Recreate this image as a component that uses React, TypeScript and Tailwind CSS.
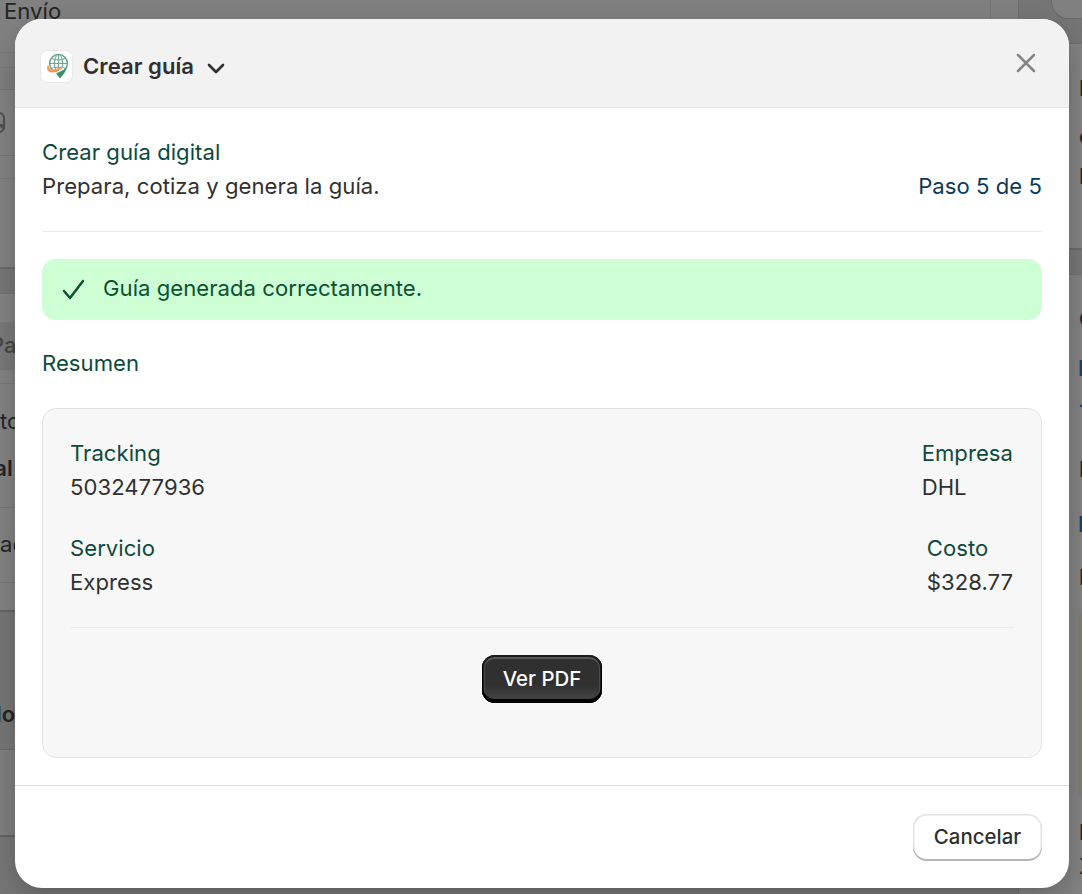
import type { ReactNode } from "react";

function Pair({ label, value }: { label: string; value: string }) {
  return (
    <div>
      <div className="text-[#0c4a3e]">{label}</div>
      <div>{value}</div>
    </div>
  );
}

function Row({ className, children }: { className: string; children?: ReactNode }) {
  return (
    <div className={`flex shrink-0 items-center whitespace-nowrap ${className}`}>{children}</div>
  );
}

function Backdrop() {
  return (
    <div className="flex h-[894px] overflow-hidden bg-[#757575] text-[#242424]">
      <div className="flex w-[1019px] shrink-0 flex-col border-r border-[#6c6c6c]">
        <Row className="h-[53px] border-b border-[#777777] bg-[#808080] pl-[4px]">
          <span className="-mt-[30px] flex-1">Envío</span>
          <span className="h-full w-[28px] border-l border-[#747474]" />
        </Row>
        <Row className="h-[15px] border-b border-[#777777] bg-[#808080]" />
        <Row className="h-[22px] border-b border-[#727272] bg-[#7d7d7d]" />
        <Row className="h-[66px] border-b border-[#727272] bg-[#808080]">
          <svg className="-ml-[14px]" width="20" height="24" viewBox="0 0 20 24" fill="none" stroke="#505050" strokeWidth="2.2">
            <rect x="2" y="2" width="16" height="19" rx="5" />
            <path d="M11 19l3-5h4M14 14l4 4" />
          </svg>
        </Row>
        <Row className="h-[23px] border-b border-[#777777] bg-[#808080]" />
        <Row className="h-[90px] border-b-2 border-[#6a6a6a] bg-[#808080]" />
        <Row className="h-[25px] border-b border-[#707070]" />
        <Row className="h-[28px] bg-[#808080]" />
        <Row className="h-[48px] bg-[#777777] pb-[2px] font-medium text-[#454545]">
          <span className="-ml-[10px]">Pago</span>
        </Row>
        <Row className="h-[14px] border-b border-[#747474] bg-[#808080]" />
        <Row className="h-[76px] bg-[#808080] pb-[2px]"><span>total</span></Row>
        <Row className="h-[48px] border-b border-[#747474] bg-[#808080] pb-[32px] font-semibold">
          <span className="-ml-[40px]">Total</span>
        </Row>
        <Row className="h-[75px] border-b border-[#747474] bg-[#808080] pb-[2px]"><span>ado</span></Row>
        <Row className="h-[29px] border-b-2 border-[#636363] bg-[#808080]" />
        <Row className="h-[138px] border-b border-[#6b6b6b] bg-[#747474] pt-[66px] font-semibold">
          <span className="-ml-[4px]">lo</span>
        </Row>
        <Row className="h-[87px] border-b-2 border-[#626262] bg-[#7d7d7d]" />
      </div>
      <div className="flex w-[63px] shrink-0 flex-col font-semibold">
        <div className="flex h-[44px] shrink-0 justify-end border-b border-[#6c6c6c]">
          <div className="h-[19px] w-[31px] rounded-bl-[17px] border-b border-l border-[#696969] bg-[#808080]" />
        </div>
        <div className="flex h-[206px] shrink-0 flex-col items-end border-b-2 border-[#6a6a6a] bg-[#808080] pt-[27px]">
          <span className="flex h-[48px] w-[3px]">N</span>
          <span className="flex h-[40px] w-[3px]">o</span>
          <span className="flex h-[40px] w-[3px]">N</span>
        </div>
        <div className="h-[25px] shrink-0 border-b border-[#707070]" />
        <div className="flex h-[640px] shrink-0 flex-col items-end bg-[#808080] pt-[27px]">
          <span className="flex h-[49px] w-[3px]">C</span>
          <span className="flex h-[36px] w-[4px] text-[#1d3d70]">E</span>
          <span className="flex h-[65px] w-[4px] text-[#1d3d70]">+</span>
          <span className="flex h-[55px] w-[3px]">D</span>
          <span className="flex h-[53px] w-[4px] text-[#1d3d70]">E</span>
          <span className="flex h-[54px] w-[3px]">D</span>
          <div className="mb-[17px] h-[184px] w-[4px] shrink-0 rounded-l-[4px] bg-[#807a74]" />
          <span className="flex h-[34px] w-[3px]">L</span>
          <span className="flex w-[3px] font-normal">X</span>
        </div>
      </div>
    </div>
  );
}

function AppLogo() {
  return (
    <div className="mt-[6px] flex size-[31px] items-center justify-center rounded-[6px] bg-white shadow-[0_0_0_1px_#e8e8e8]">
      <svg width="24" height="26" viewBox="0 0 24 26" fill="none">
        <circle cx="13.5" cy="10.5" r="9" stroke="#5c9f86" strokeWidth="1.4" />
        <path d="M13.5 2v16M4.5 10.5h18M6.5 5.5q7 2.5 14 0M6 15.5q7.500-3 15 0M11.500 2.500Q7 10 11.500 18M15.500 2.500Q20 10 15.500 18" stroke="#6ba991" strokeWidth="1.1" />
        <path d="M22 12.500Q20 18 11 20.500L15 25.500Q21.500 19 22 12.500Z" fill="#3d9168" />
        <path d="M3 12.500Q.8 17.500 5.500 19Q11 20 17 14.500L12 14.300L13 15.800L8.500 17Q4 17 3 12.500Z" fill="#f09a55" stroke="#f09a55" strokeWidth=".6" />
        <path d="M5.500 20.300Q12 21.500 18 15" stroke="#fff" strokeWidth="1" />
      </svg>
    </div>
  );
}

export default function App() {
  return (
    <main className="relative h-[894px] w-[1082px] overflow-hidden font-['Inter',sans-serif] text-[22.1px] leading-[34px] tracking-[0.04px] text-[#303030]">
      <Backdrop />
      <section
        role="dialog"
        className="absolute top-[19px] left-[15px] flex h-[869px] w-[1054px] flex-col overflow-hidden rounded-[27px] bg-white shadow-[0_8px_24px_-4px_rgba(0,0,0,0.28)]"
      >
        <header className="flex h-[89px] shrink-0 items-center border-b border-[#e1e1e1] bg-[#f2f2f2] pr-[33px] pl-[26px]">
          <AppLogo />
          <h1 className="mt-[6px] ml-[11px] font-[580]">Crear guía</h1>
          <svg className="mt-[11px] ml-[13px]" width="18" height="12" viewBox="0 0 18 12" fill="none" stroke="#303030" strokeWidth="2.7" strokeLinecap="round" strokeLinejoin="round">
            <path d="M2 2l7 7 7-7" />
          </svg>
          <button aria-label="Cerrar" className="ml-auto">
            <svg width="20" height="20" viewBox="0 0 20 20" fill="none" stroke="#858585" strokeWidth="2.500" strokeLinecap="round">
              <path d="M2 2l16 16M18 2L2 18" />
            </svg>
          </button>
        </header>

        <div className="flex-1 px-[27px] pt-[27px]">
          <div className="text-[#0c4a3e]">Crear guía digital</div>
          <div className="flex justify-between">
            <span>Prepara, cotiza y genera la guía.</span>
            <span className="text-[#0a3a5a]">Paso 5 de 5</span>
          </div>
          <hr className="mt-[28px] border-[#ebebeb]" />
          <div className="mt-[27px] flex h-[61px] items-center rounded-[14px] bg-[#cdfed4] pl-[20px] text-[#0c5132]">
            <svg width="24" height="22" viewBox="0 0 24 22" fill="none" stroke="#0c5132" strokeWidth="2.500" strokeLinecap="round" strokeLinejoin="round">
              <path d="M2 12l6 7L21 2" />
            </svg>
            <span className="mb-[3px] ml-[17px]">Guía generada correctamente.</span>
          </div>
          <h2 className="mt-[26px] text-[#0c4a3e]">Resumen</h2>
          <div className="mt-[28px] h-[350px] rounded-[14px] border border-[#e3e3e3] bg-[#f7f7f7] p-[27px]">
            <div className="flex justify-between pr-px">
              <Pair label="Tracking" value="5032477936" />
              <Pair label="Empresa" value="DHL" />
            </div>
            <div className="mt-[27px] flex justify-between pr-px">
              <Pair label="Servicio" value="Express" />
              <Pair label="Costo" value="$328.77" />
            </div>
            <hr className="mt-[28px] border-[#ebebeb]" />
            <div className="mt-[27px] flex justify-center">
              <button className="h-[48px] w-[120px] rounded-[13px] bg-linear-to-b from-[#303030] from-60% to-[#484848] text-[20.4px] font-[550] text-white shadow-[inset_0_-3px_0_1px_#000,inset_0_0_0_2px_#1c1c1c,inset_0_3px_0_1px_#585858,inset_0_0_0_3px_#4a4a4a]">
                Ver PDF
              </button>
            </div>
          </div>
        </div>

        <footer className="flex h-[103px] shrink-0 items-center justify-end border-t border-[#dedede] pr-[27px]">
          <button className="h-[47px] w-[129px] rounded-[14px] bg-white text-[20.4px] font-[550] shadow-[inset_0_-2px_0_#b5b5b5,inset_0_0_0_1.5px_#e3e3e3]">
            Cancelar
          </button>
        </footer>
      </section>
    </main>
  );
}
